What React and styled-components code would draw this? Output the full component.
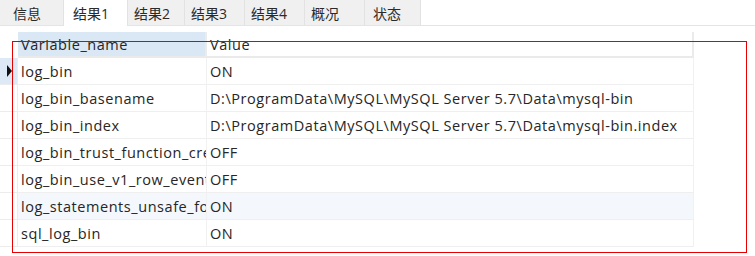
import React from 'react';
import styled, { createGlobalStyle } from 'styled-components';

const GlobalStyle = createGlobalStyle`
  html, body {
    margin: 0;
    padding: 0;
    background: #ffffff;
  }
  body {
    font-family: "Open Sans", "Noto Sans CJK SC", sans-serif;
    color: #262626;
  }
`;

const tabs = [
    { label: '信息', width: 64, pad: 13 },
    { label: '结果1', width: 64, pad: 9, active: true },
    { label: '结果2', width: 57, pad: 6 },
    { label: '结果3', width: 60, pad: 6 },
    { label: '结果4', width: 60, pad: 6 },
    { label: '概况', width: 60, pad: 6 },
    { label: '状态', width: 56, pad: 8 },
];

const rows = [
    ['log_bin', 'ON'],
    ['log_bin_basename', 'D:\\ProgramData\\MySQL\\MySQL Server 5.7\\Data\\mysql-bin'],
    ['log_bin_index', 'D:\\ProgramData\\MySQL\\MySQL Server 5.7\\Data\\mysql-bin.index'],
    ['log_bin_trust_function_creators', 'OFF'],
    ['log_bin_use_v1_row_events', 'OFF'],
    ['log_statements_unsafe_for_binlog', 'ON'],
    ['sql_log_bin', 'ON'],
];

const Page = styled.div`
    position: relative;
    width: 755px;
    height: 256px;
    overflow: hidden;
    background: #ffffff;
`;

const TabStrip = styled.div`
    display: flex;
    height: 25px;
    border-bottom: 1px solid #e4e4e4;
    background: #ffffff;
`;

const Tab = styled.div`
    width: ${({ $w }) => $w}px;
    box-sizing: border-box;
    display: flex;
    align-items: center;
    padding-left: ${({ $pad }) => $pad}px;
    font-size: 14px;
    color: #2a2a2a;
    background: ${({ $active }) => ($active ? '#ffffff' : '#f0f0f0')};
    border-right: 1px solid #e2e2e2;
    margin-bottom: ${({ $active }) => ($active ? '-1px' : '0')};
    padding-bottom: ${({ $active }) => ($active ? '1px' : '0')};
    padding-top: 1px;
`;

const Grid = styled.div`
    margin-top: 6px;
    width: 694px;
    display: grid;
    grid-template-columns: 18px 189px 487px;
    font-size: 14.5px;
    letter-spacing: 0.55px;
`;

const Indicator = styled.div`
    height: 27px;
    box-sizing: border-box;
    border-bottom: 1px solid #ececec;
    border-right: 1px solid #ececec;
    background: ${({ $selected }) => ($selected ? '#dde9f6' : '#ffffff')};
    display: flex;
    align-items: center;
    padding-left: 7px;
`;

const Corner = styled.div`
    height: 26px;
`;

const HeaderCell = styled.div`
    height: 26px;
    box-sizing: border-box;
    padding-left: 3px;
    display: flex;
    align-items: center;
    background: ${({ $blue }) => ($blue ? '#dae8f6' : '#ffffff')};
    border-bottom: 2px solid #eaeaea;
    border-right: 2px solid #ebebeb;
    white-space: nowrap;
`;

const Cell = styled.div`
    height: 27px;
    box-sizing: border-box;
    padding-left: 3px;
    display: flex;
    align-items: center;
    overflow: hidden;
    white-space: nowrap;
    background: ${({ $hover }) => ($hover ? '#f4f8fc' : '#ffffff')};
    border-bottom: 1px solid #efefef;
    border-right: 1px solid #f1f1f1;
`;

const Arrow = styled.div`
    width: 0;
    height: 0;
    border-top: 6px solid transparent;
    border-bottom: 6px solid transparent;
    border-left: 5px solid #111;
`;

const Highlight = styled.div`
    position: absolute;
    left: 12px;
    top: 41px;
    width: 735px;
    height: 212px;
    box-sizing: border-box;
    border: 1px solid #e60000;
    pointer-events: none;
`;

const App = () => {
    return (
        <Page>
            <GlobalStyle />
            <TabStrip>
                {tabs.map((t) => (
                    <Tab key={t.label} $w={t.width} $pad={t.pad} $active={t.active}>
                        {t.label}
                    </Tab>
                ))}
            </TabStrip>
            <Grid>
                <Corner />
                <HeaderCell $blue>Variable_name</HeaderCell>
                <HeaderCell>Value</HeaderCell>
                {rows.map(([name, value], i) => (
                    <React.Fragment key={name}>
                        <Indicator $selected={i === 0}>{i === 0 && <Arrow />}</Indicator>
                        <Cell $hover={i === 5}>{name}</Cell>
                        <Cell $hover={i === 5}>{value}</Cell>
                    </React.Fragment>
                ))}
            </Grid>
            <Highlight />
        </Page>
    );
};

export default App;
